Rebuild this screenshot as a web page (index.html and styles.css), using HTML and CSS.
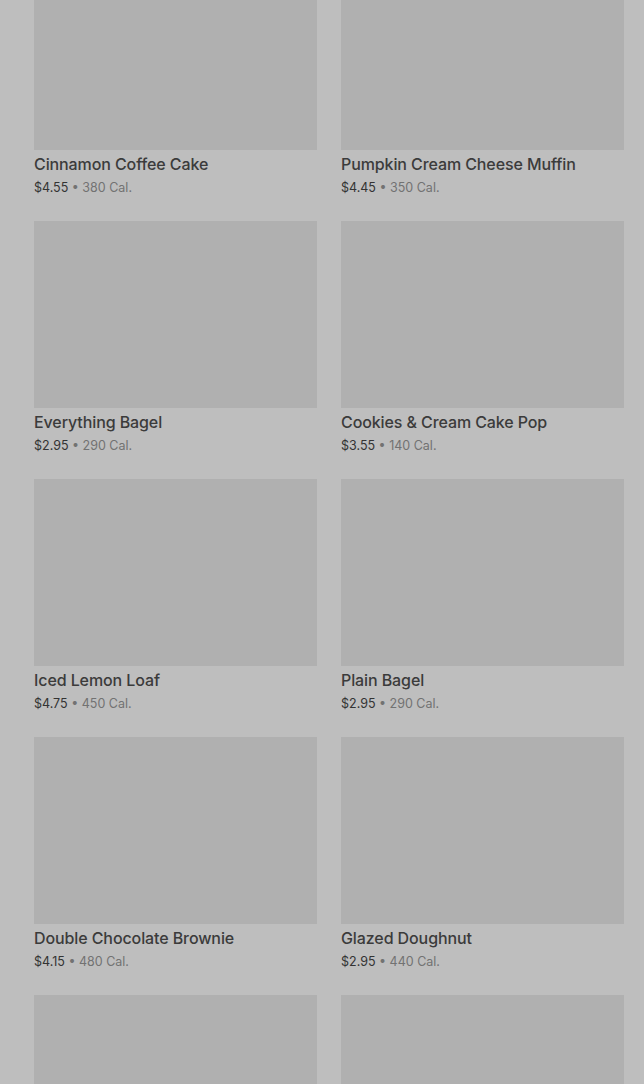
FILE: index.html
```html
<!DOCTYPE html>
<html lang="en">
<head>
  <meta charset="UTF-8" />
  <meta name="viewport" content="width=device-width, initial-scale=1.0"/>
  <title>Bakery</title>
  <link rel="stylesheet" href="styles.css">
</head>
<body>
  <!-- product grid, dimmed behind an overlay -->
  <div class="menu-grid">
    <div class="product">
      <div class="product-image"></div>
      <p class="product-name">Cinnamon Coffee Cake</p>
      <p class="product-meta"><span class="price">$4.55</span> &bull; 380 Cal.</p>
    </div>
    <div class="product">
      <div class="product-image"></div>
      <p class="product-name">Pumpkin Cream Cheese Muffin</p>
      <p class="product-meta"><span class="price">$4.45</span> &bull; 350 Cal.</p>
    </div>
    <div class="product">
      <div class="product-image"></div>
      <p class="product-name">Everything Bagel</p>
      <p class="product-meta"><span class="price">$2.95</span> &bull; 290 Cal.</p>
    </div>
    <div class="product">
      <div class="product-image"></div>
      <p class="product-name">Cookies &amp; Cream Cake Pop</p>
      <p class="product-meta"><span class="price">$3.55</span> &bull; 140 Cal.</p>
    </div>
    <div class="product">
      <div class="product-image"></div>
      <p class="product-name">Iced Lemon Loaf</p>
      <p class="product-meta"><span class="price">$4.75</span> &bull; 450 Cal.</p>
    </div>
    <div class="product">
      <div class="product-image"></div>
      <p class="product-name">Plain Bagel</p>
      <p class="product-meta"><span class="price">$2.95</span> &bull; 290 Cal.</p>
    </div>
    <div class="product">
      <div class="product-image"></div>
      <p class="product-name">Double Chocolate Brownie</p>
      <p class="product-meta"><span class="price">$4.15</span> &bull; 480 Cal.</p>
    </div>
    <div class="product">
      <div class="product-image"></div>
      <p class="product-name">Glazed Doughnut</p>
      <p class="product-meta"><span class="price">$2.95</span> &bull; 440 Cal.</p>
    </div>
    <div class="product">
      <div class="product-image"></div>
    </div>
    <div class="product">
      <div class="product-image"></div>
    </div>
  </div>
</body>
</html>
```

FILE: styles.css
```css
body {
  margin: 0;
  background-color: #bebebe;
  font-family: Inter, Roboto, "Liberation Sans", sans-serif;
  overflow: hidden;
}

/* page is scrolled a little, first row of images is cut off */
.menu-grid {
  display: grid;
  grid-template-columns: 283px 283px;
  column-gap: 24px;
  row-gap: 24px;
  padding: 0 20px 0 34px;
  margin-top: -37px;
}

.product-image {
  height: 187px;
  background-color: #b0b0b0;
}

.product-name {
  margin: 4px 0 0;
  font-size: 16px;
  line-height: 20px;
  font-weight: 500;
  letter-spacing: -0.1px;
  color: #3b3b3b;
}

.product-meta {
  margin: 4px 0 0;
  font-size: 12.5px;
  line-height: 19px;
  color: #727272;
}

.price {
  color: #333333;
}
```
